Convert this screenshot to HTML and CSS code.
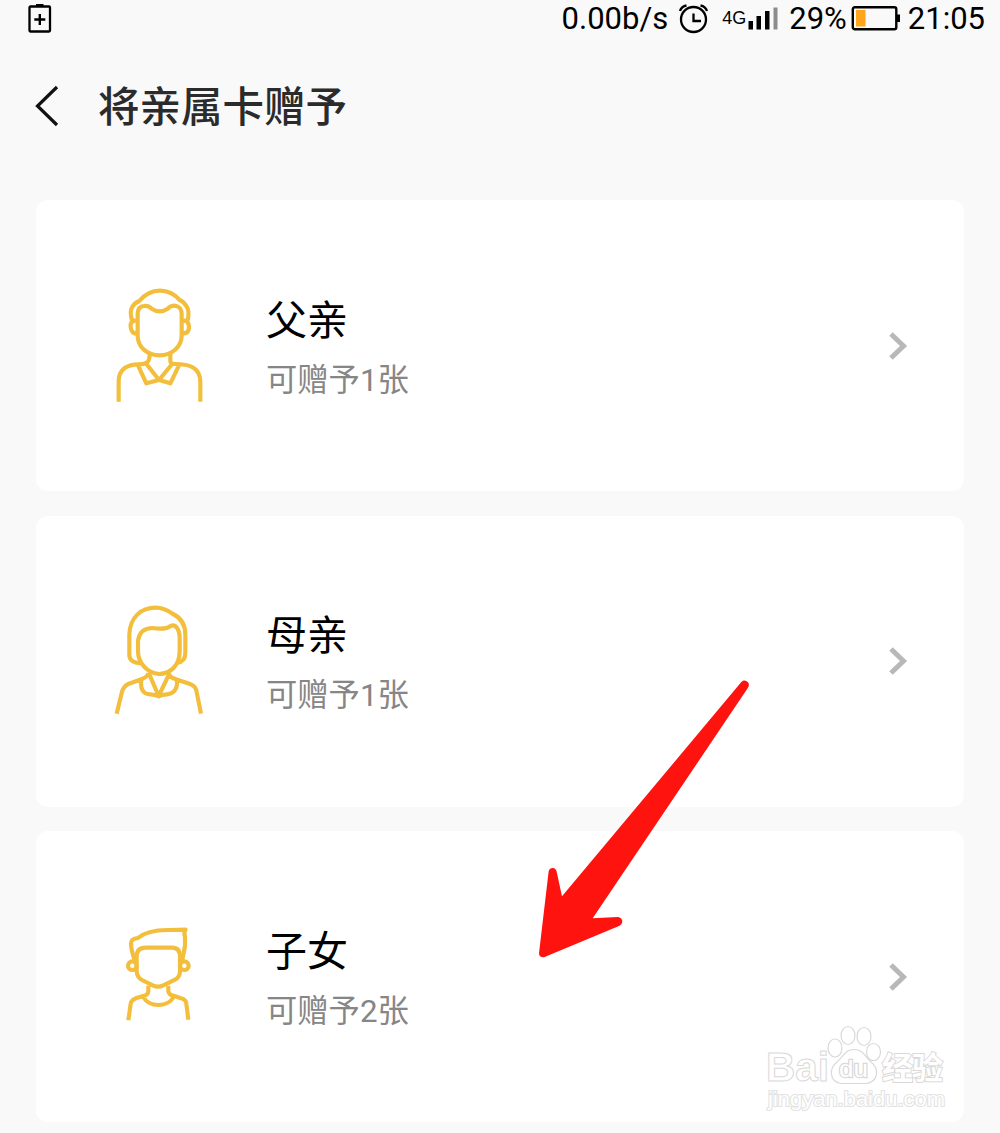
FILE: index.html
```html
<!DOCTYPE html>
<html lang="zh-CN">
<head>
    <meta charset="UTF-8">
    <meta name="viewport" content="width=device-width, initial-scale=1.0">
    <title>将亲属卡赠予</title>
    <link rel="stylesheet" href="styles.css">
</head>
<body>
    <div class="status-bar">
        <svg class="saver" width="24" height="30" viewBox="0 0 24 30">
            <rect x="1.5" y="2.5" width="20.5" height="25" rx="1" fill="none" stroke="#000" stroke-width="2.3"/>
            <path d="M8 1.2h7.5M11.8 10v11M6.3 15.5h11" fill="none" stroke="#000" stroke-width="2.4"/>
        </svg>
        <div class="status-right">
            <span class="speed">0.00b/s</span>
            <svg class="alarm" width="30" height="32" viewBox="0 0 30 32">
                <g fill="none" stroke="#000" stroke-width="2.3">
                    <circle cx="14.5" cy="16.5" r="12.5"/>
                    <path d="M14.5 10.5v7.5h7.5M1 8q1.5-4.5 6.5-5.5M28 8q-1.5-4.5-6.5-5.5"/>
                </g>
            </svg>
            <span class="network">4G</span>
            <svg class="signal" width="31" height="24" viewBox="0 0 31 24">
                <path d="M0.5 14h4.5v8.5H0.5zM8.5 9h4.5v13.5H8.5zM17 4h4.5v18.5h-4.5z" fill="#000"/>
                <path d="M25.5 0.5h4v22h-4z" fill="#8c8c8c"/>
            </svg>
            <span class="percent">29%</span>
            <svg class="battery" width="50" height="26" viewBox="0 0 50 26">
                <rect x="1.8" y="1.3" width="43.5" height="22" rx="2" fill="none" stroke="#000" stroke-width="2.4"/>
                <rect x="5" y="4" width="9.5" height="16.5" fill="#ffa41b"/>
                <rect x="46" y="8.5" width="3" height="7.5" fill="#000"/>
            </svg>
            <span class="clock">21:05</span>
        </div>
    </div>

    <div class="header">
        <svg class="back" width="28" height="44" viewBox="0 0 28 44">
            <path d="M24 2L4.5 21L24 40" fill="none" stroke="#111" stroke-width="3.2"/>
        </svg>
        <h1>将亲属卡赠予</h1>
    </div>

    <div class="cards">
        <div class="card">
            <svg class="person" width="120" height="140" viewBox="0 0 360 420">
                <g transform="translate(0 -3)">
                    <path d="M113 182V118Q113 94 132 93Q145 91 155 101Q179 117 203 101Q216 88 232 94Q245 99 245 118V180C245 217 215 241 179 241C143 241 113 217 113 182Z"/>
                    <path d="M113 176C90 178 88 148 97 139C92 123 89 105 98 94Q103 84 118 78C137 55 157 47 180 47C207 47 223 57 239 75Q250 79 259 93C268 105 266 125 262 141C271 153 269 178 246 175M97 141Q104 134 110 139M246 139Q256 134 262 141"/>
                    <path d="M56 380V319C56 282 82 268 117 268C140 268 149 263 149 236M211 236V258Q211 267 225 267C268 267 301 277 301 321V380M113 269L139 325L177 315L137 264M177 315L211 325L238 269M177 315L219 264"/>
                </g>
            </svg>
            <div class="info">
                <div class="name">父亲</div>
                <div class="count">可赠予1张</div>
            </div>
            <svg class="arrow" width="20" height="30" viewBox="0 0 20 30">
                <path d="M3 3L15.5 15L3 27"/>
            </svg>
        </div>

        <div class="card">
            <svg class="person" width="120" height="140" viewBox="0 0 360 420">
                <path d="M114 180V149C118 123 134 111 158 111C177 114 198 116 212 105C227 98 239 115 239 142V183C238 220 215 248 177 249C140 246 114 214 114 180Z"/>
                <path d="M124 216C102 218 89 208 88 193V130C90 79 123 50 167 50C189 50 202 57 219 69C244 81 256 102 256 131V187Q256 213 229 216"/>
                <path d="M50 368L66 302Q71 285 87 278L126 264Q143 257 145 246M206 246Q207 259 228 265L268 278Q286 284 289 298L303 368M124 266C121 290 126 310 152 310Q162 311 176 316Q185 311 201 310C227 308 233 286 231 267M148 250L176 315L207 250"/>
            </svg>
            <div class="info">
                <div class="name">母亲</div>
                <div class="count">可赠予1张</div>
            </div>
            <svg class="arrow" width="20" height="30" viewBox="0 0 20 30">
                <path d="M3 3L15.5 15L3 27"/>
            </svg>
        </div>

        <div class="card">
            <svg class="person" width="120" height="140" viewBox="0 0 360 420">
                <g transform="translate(0 10)">
                    <path d="M110 139Q110 112 137 112H216Q240 112 240 139V181Q240 201 225 208L190 225Q174 233 158 225L126 209Q110 200 110 181Z"/>
                    <path d="M105 153C98 133 93 116 93 99Q93 85 114 83C139 61 174 58 211 59L257 58Q250 66 255 79V107L246 153"/>
                    <circle cx="97" cy="166" r="13"/>
                    <circle cx="253" cy="166" r="13"/>
                    <path d="M85 330L92 280Q93 270 107 264L129 257Q144 255 145 243V226M205 226V243Q207 254 223 257L243 264Q258 268 259 280L265 328M129 257C144 293 206 293 222 257"/>
                </g>
            </svg>
            <div class="info">
                <div class="name">子女</div>
                <div class="count">可赠予2张</div>
            </div>
            <svg class="arrow" width="20" height="30" viewBox="0 0 20 30">
                <path d="M3 3L15.5 15L3 27"/>
            </svg>
        </div>
    </div>

    <!-- red pointer over the cards -->
    <svg class="pointer" width="240" height="300" viewBox="0 0 720 900">
        <path d="M664 36Q674 27 684 37Q690 44 683 55L218 745L294 741Q305 743 307 753Q307 763 297 768L72 862Q57 863 57 850L86 604Q89 594 98 594Q108 595 110 605L126 679Z"/>
    </svg>

    <svg class="watermark" width="250" height="123" viewBox="0 0 250 123">
        <g class="mark-line">
            <ellipse cx="85" cy="38" rx="7" ry="9"/>
            <ellipse cx="98" cy="25.5" rx="7" ry="9"/>
            <ellipse cx="114" cy="26.5" rx="7" ry="9"/>
            <ellipse cx="123.5" cy="42" rx="7" ry="8.5"/>
            <path d="M104 39.5C95 39.5 93 47 87 52C79 58 79 72 91 73.5H116C128 72 130 59 121 52C115 47 114 39.5 104 39.5Z"/>
        </g>
        <text class="mark-brand" x="16" y="71" textLength="63" lengthAdjust="spacingAndGlyphs">Bai</text>
        <text class="mark-du" x="89" y="67" textLength="29" lengthAdjust="spacingAndGlyphs">du</text>
        <text class="mark-cn" x="132" y="69" textLength="61">经验</text>
        <text class="mark-url" x="18" y="96" textLength="177" lengthAdjust="spacingAndGlyphs">jingyan.baidu.com</text>
    </svg>
</body>
</html>
```

FILE: styles.css
```css
* {
    box-sizing: border-box;
}

body {
    position: relative;
    margin: 0;
    height: 1133px;
    overflow: hidden;
    background-color: #f9f9f9;
    font-family: Roboto, "Noto Sans CJK SC", sans-serif;
    color: #000;
}

svg {
    display: block;
    flex: none;
}

.status-bar {
    display: flex;
    justify-content: space-between;
    align-items: center;
    height: 37px;
    padding: 0 15px 0 28px;
    font-size: 31px;
    line-height: 37px;
}

.status-right {
    display: flex;
    align-items: center;
}

.speed {
    margin-right: 1px;
}

.alarm {
    margin: 0 13px 0 10px;
}

.network {
    font-family: "Liberation Sans", Arial, sans-serif;
    font-size: 18px;
}

.signal {
    margin: 0 10px 0 2px;
}

.battery {
    margin: 0 7px 0 4px;
}

.header {
    display: flex;
    align-items: center;
    gap: 37px;
    height: 139px;
    padding-left: 33px;
}

h1 {
    margin: 0;
    padding-top: 3px;
    font-size: 41.5px;
    font-weight: 500;
    line-height: 60px;
    color: #2b2b2b;
}

.cards {
    display: flex;
    flex-direction: column;
    gap: 24.5px;
    padding: 24px 36px 0;
}

.card {
    display: flex;
    align-items: center;
    height: 291px;
    padding: 0 56px 0 64px;
    background: #fff;
    border-radius: 12px;
}

.person {
    fill: none;
    stroke: #f3be3c;
    stroke-width: 12.5;
    stroke-linejoin: round;
}

.info {
    flex: 1;
    margin-left: 46px;
    padding-top: 10px;
}

.name {
    font-size: 41px;
    line-height: 60px;
}

.count {
    font-size: 31.3px;
    line-height: 60px;
    color: #868686;
}

.arrow {
    fill: none;
    stroke: #b8b8b8;
    stroke-width: 5;
}

.pointer {
    position: absolute;
    left: 520px;
    top: 670px;
    fill: #fe130f;
}

.watermark {
    position: absolute;
    left: 750px;
    top: 1010px;
    fill: #fff;
    stroke: #d9d9d9;
    stroke-width: 1.2;
}

.watermark text {
    font-family: "Liberation Sans", Arial, sans-serif;
    stroke-width: 1;
}

.watermark .mark-brand {
    font-size: 40px;
    font-weight: bold;
}

.watermark .mark-du {
    paint-order: stroke;
    stroke-width: 2.4;
    font-size: 24px;
}

.watermark .mark-cn {
    paint-order: stroke;
    stroke-width: 2;
    font-family: "Noto Sans CJK SC", sans-serif;
    font-size: 31px;
    font-weight: bold;
}

.watermark .mark-url {
    paint-order: stroke;
    stroke-width: 2;
    stroke: #e2e2e2;
    font-size: 20.5px;
}
```
